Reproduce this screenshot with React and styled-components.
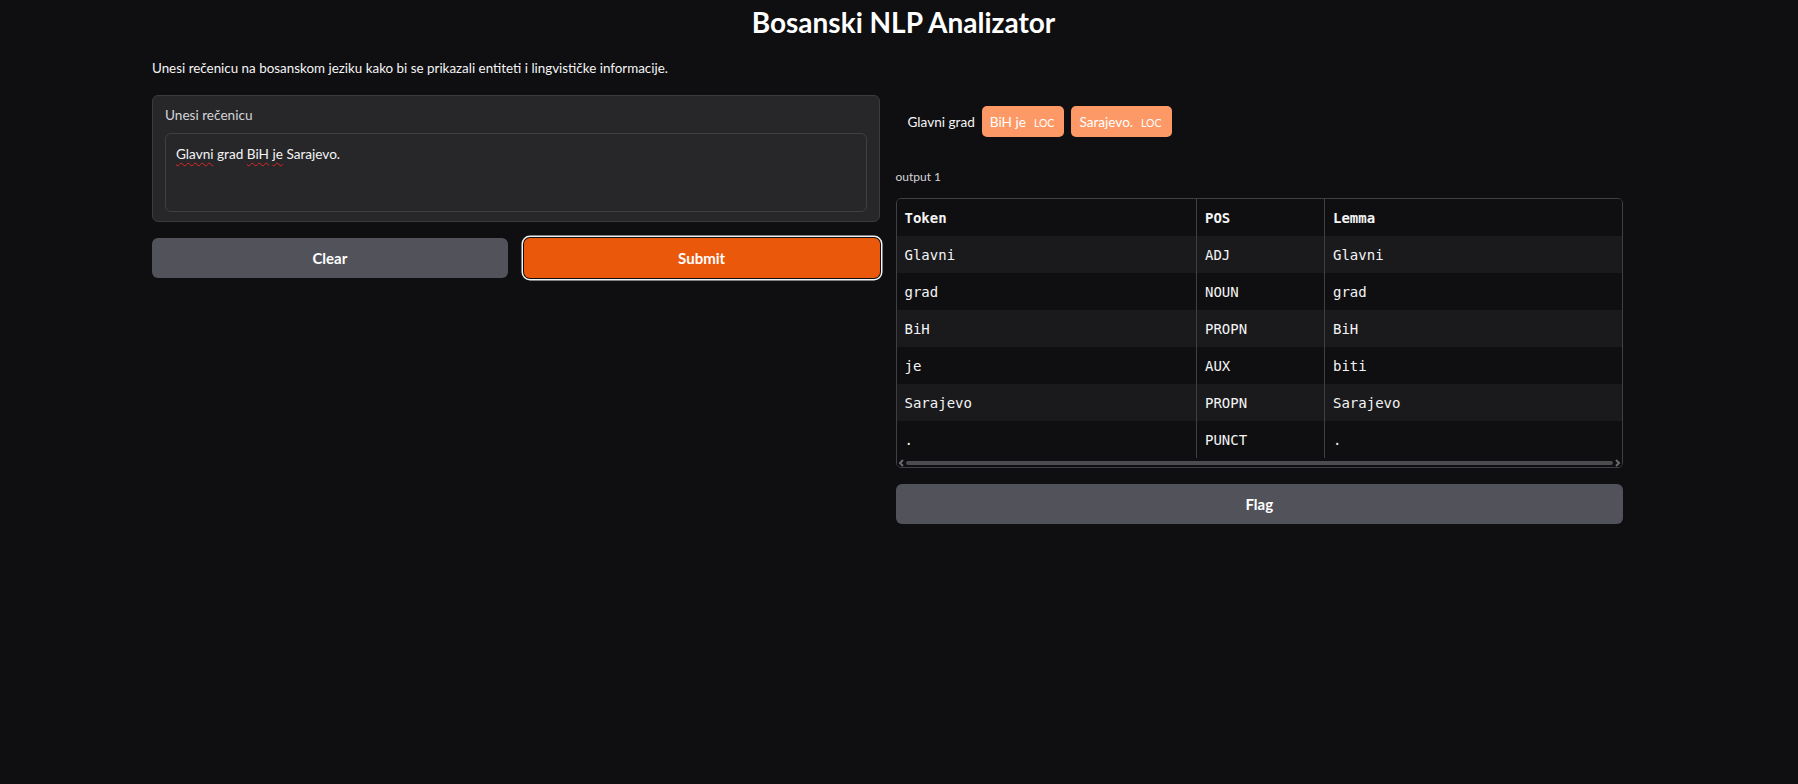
import React from 'react';
import styled, {createGlobalStyle} from 'styled-components';

const GlobalStyle = createGlobalStyle`
  body {
    margin: 0;
    background: #0f0f11;
    color: #f4f4f5;
    font-family: Lato, "Open Sans", sans-serif;
  }
`;

const Page = styled.div`
  display: flex;
  flex-direction: column;
`;

const Title = styled.h1`
  margin: 6px 0 0;
  padding-left: 9px;
  font-size: 28px;
  line-height: 32px;
  font-weight: 700;
  text-align: center;
  color: #fff;
`;

const Content = styled.div`
  width: 1471px;
  padding-left: 152px;
`;

const Description = styled.p`
  margin: 20px 0 0;
  font-size: 13.4px;
  line-height: 20px;
  color: #f4f4f5;
`;

const Columns = styled.div`
  display: grid;
  grid-template-columns: 1fr 1fr;
  gap: 16px;
  margin-top: 17px;
  align-items: start;
`;

const Column = styled.div`
  display: flex;
  flex-direction: column;
  gap: ${p => p.gap ?? 16}px;
`;

const Block = styled.div`
  background: #27272a;
  border: 1px solid #3a3a3f;
  border-radius: 6px;
  padding: 9px 12px 9px;
  display: flex;
  flex-direction: column;
  gap: 8px;
`;

const Label = styled.span`
  font-size: ${p => p.small ? 12 : 13.6}px;
  line-height: ${p => p.small ? 16 : 20}px;
  color: #d4d4d8;
`;

const TextBox = styled.div`
  height: 57px;
  padding: 10px;
  border: 1px solid #3f3f46;
  border-radius: 6px;
  background: #27272a;
  font-size: 13.6px;
  line-height: 20px;
  color: #f4f4f5;
`;

const Misspelled = styled.span`
  text-decoration: underline wavy #dc2626;
  text-decoration-thickness: 1px;
  text-underline-offset: 3px;
`;

const ButtonRow = styled.div`
  display: grid;
  grid-template-columns: 1fr 1fr;
  gap: 16px;
`;

const Button = styled.button`
  height: 40px;
  border: none;
  border-radius: 6px;
  background: ${p => p.primary ? '#ea580c' : '#52525b'};
  color: #fff;
  font-family: inherit;
  font-size: 15px;
  font-weight: 700;
  box-shadow: ${p => p.focused ? '0 0 0 1px #0f0f11, 0 0 0 2.5px #f4f4f5' : 'none'};
  cursor: pointer;
`;

const Highlights = styled.div`
  display: flex;
  align-items: center;
  gap: 7px;
  margin: 11px 0 0 12px;
  font-size: 13.6px;
  color: #f4f4f5;
`;

const Chip = styled.span`
  display: inline-flex;
  align-items: center;
  height: 31px;
  padding: 0 10px 0 8px;
  gap: 8px;
  border-radius: 5px;
  background: #fd9966;
  color: #fff;
`;

const ChipTag = styled.span`
  font-size: 10.5px;
  margin-top: 2px;
`;

const OutputLabel = styled(Label)`
  margin-top: 32px;
`;

const TableFrame = styled.div`
  margin-top: 13px;
  border: 1px solid #3f3f46;
  border-radius: 5px;
  overflow: hidden;
`;

const Table = styled.table`
  width: 100%;
  border-collapse: collapse;
  table-layout: fixed;
  font-family: "DejaVu Sans Mono", "Liberation Mono", monospace;
  font-size: 14px;
  color: #f4f4f5;
`;

const Row = styled.tr`
  height: 37px;
  background: ${p => p.striped ? '#1a1a1d' : '#0f0f11'};
`;

const HeadCell = styled.th`
  text-align: left;
  padding: 0 8px;
  font-weight: 700;
  & + & { border-left: 1px solid #3f3f46; }
`;

const Cell = styled.td`
  padding: 0 8px;
  & + & { border-left: 1px solid #3f3f46; }
`;

const ScrollBar = styled.div`
  display: flex;
  align-items: center;
  gap: 1px;
  height: 9px;
  padding: 0 1px;
  background: #0f0f11;
`;

const Thumb = styled.div`
  flex: 1;
  height: 4px;
  border-radius: 2px;
  background: #4b4b50;
`;

const FlagButton = styled(Button)`
  margin-top: 16px;
`;

const Chevron = ({dir}) => (
  <svg width="7" height="8" viewBox="0 0 7 8">
    <path
      d={dir === 'left' ? 'M5 1 L2 4 L5 7' : 'M2 1 L5 4 L2 7'}
      stroke="#6b6b70"
      strokeWidth="2"
      fill="none"
    />
  </svg>
);

const rows = [
  ['Glavni', 'ADJ', 'Glavni'],
  ['grad', 'NOUN', 'grad'],
  ['BiH', 'PROPN', 'BiH'],
  ['je', 'AUX', 'biti'],
  ['Sarajevo', 'PROPN', 'Sarajevo'],
  ['.', 'PUNCT', '.'],
];

export default function App() {
  return (
    <Page>
      <GlobalStyle/>
      <Title>Bosanski NLP Analizator</Title>
      <Content>
        <Description>
          Unesi rečenicu na bosanskom jeziku kako bi se prikazali entiteti i lingvističke informacije.
        </Description>
        <Columns>
          <Column>
            <Block>
              <Label>Unesi rečenicu</Label>
              <TextBox role="textbox">
                <Misspelled>Glavni</Misspelled> grad <Misspelled>BiH</Misspelled> <Misspelled>je</Misspelled> Sarajevo.
              </TextBox>
            </Block>
            <ButtonRow>
              <Button>Clear</Button>
              <Button primary focused>Submit</Button>
            </ButtonRow>
          </Column>
          <Column gap={0}>
            <Highlights>
              <span>Glavni grad</span>
              <Chip>BiH je<ChipTag>LOC</ChipTag></Chip>
              <Chip>Sarajevo.<ChipTag>LOC</ChipTag></Chip>
            </Highlights>
            <OutputLabel small>output 1</OutputLabel>
            <TableFrame>
              <Table>
                <colgroup>
                  <col style={{width: 300}}/>
                  <col style={{width: 128}}/>
                  <col/>
                </colgroup>
                <thead>
                  <Row>
                    <HeadCell>Token</HeadCell>
                    <HeadCell>POS</HeadCell>
                    <HeadCell>Lemma</HeadCell>
                  </Row>
                </thead>
                <tbody>
                  {rows.map((r, i) => (
                    <Row key={i} striped={i % 2 === 0}>
                      {r.map((c, j) => <Cell key={j}>{c}</Cell>)}
                    </Row>
                  ))}
                </tbody>
              </Table>
              <ScrollBar>
                <Chevron dir="left"/>
                <Thumb/>
                <Chevron dir="right"/>
              </ScrollBar>
            </TableFrame>
            <FlagButton>Flag</FlagButton>
          </Column>
        </Columns>
      </Content>
    </Page>
  );
}
